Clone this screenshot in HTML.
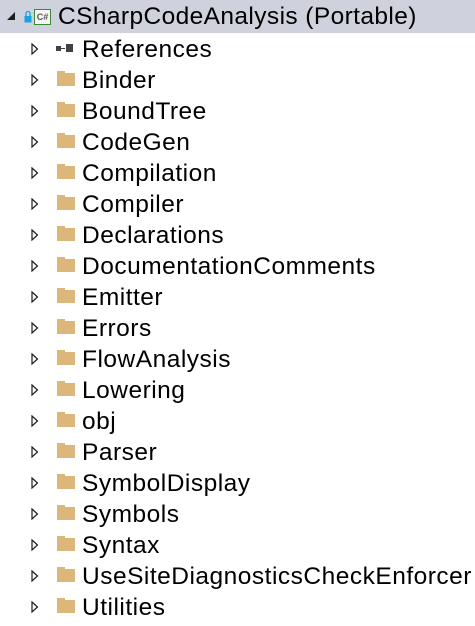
<!DOCTYPE html>
<html><head><style>
body{margin:0;width:475px;height:626px;background:#fff;overflow:hidden;font-family:"Liberation Sans",Arial,sans-serif;}
.hdr{position:absolute;left:0;top:0;width:475px;height:33px;background:#cfd1dc;}
.row{position:absolute;left:0;height:31px;width:475px;}
.t{position:absolute;left:82px;top:1px;line-height:31px;font-size:24.5px;color:#000;white-space:nowrap;letter-spacing:0.5px;}
.tri{position:absolute;left:31px;top:10px;}
.fold{position:absolute;left:57px;top:9px;width:18px;height:13px;background:#dcb67a;}
.fold:before{content:"";position:absolute;left:0;top:-2px;width:8px;height:3px;background:#dcb67a;}
</style></head><body>
<div class="hdr">
<svg style="position:absolute;left:7px;top:12px" width="9" height="9"><polygon points="8,0 8,8 0,8" fill="#1e1e1e"/></svg>
<svg style="position:absolute;left:24px;top:10px" width="8" height="13"><path d="M2,6 V3.5 a2,2 0 0 1 4,0 V6" stroke="#1ba1e2" stroke-width="1.3" fill="none"/><rect x="0.5" y="6" width="7" height="6.5" fill="#1ba1e2"/></svg>
<div style="position:absolute;left:34px;top:9px;width:15px;height:14px;border:1.5px solid #388a34;background:#f6f6f6;font-size:9px;line-height:14px;text-align:center;font-weight:bold;color:#555">C#</div>
<div class="t" style="left:58px;top:0;line-height:33px;letter-spacing:0.4px">CSharpCodeAnalysis (Portable)</div>
</div>
<div id="rows"></div>
<script>
var n=["References","Binder","BoundTree","CodeGen","Compilation","Compiler","Declarations","DocumentationComments","Emitter","Errors","FlowAnalysis","Lowering","obj","Parser","SymbolDisplay","Symbols","Syntax","UseSiteDiagnosticsCheckEnforcer","Utilities"];
var h="";
n.forEach(function(s,i){
var icon=i==0?'<div style="position:absolute;left:56px;top:13px;width:5px;height:5px;background:#424242"></div><div style="position:absolute;left:61px;top:15px;width:4px;height:1px;background:#424242"></div><div style="position:absolute;left:66px;top:11px;width:7px;height:8px;background:#424242"></div>':'<div class="fold"></div>';
h+='<div class="row" style="top:'+(33+i*31)+'px"><svg class="tri" width="8" height="12"><polygon points="1,1 6.5,6 1,11" fill="none" stroke="#1e1e1e" stroke-width="1.2"/></svg>'+icon+'<div class="t">'+s+'</div></div>';
});
document.getElementById("rows").innerHTML=h;
</script>
</body></html>
